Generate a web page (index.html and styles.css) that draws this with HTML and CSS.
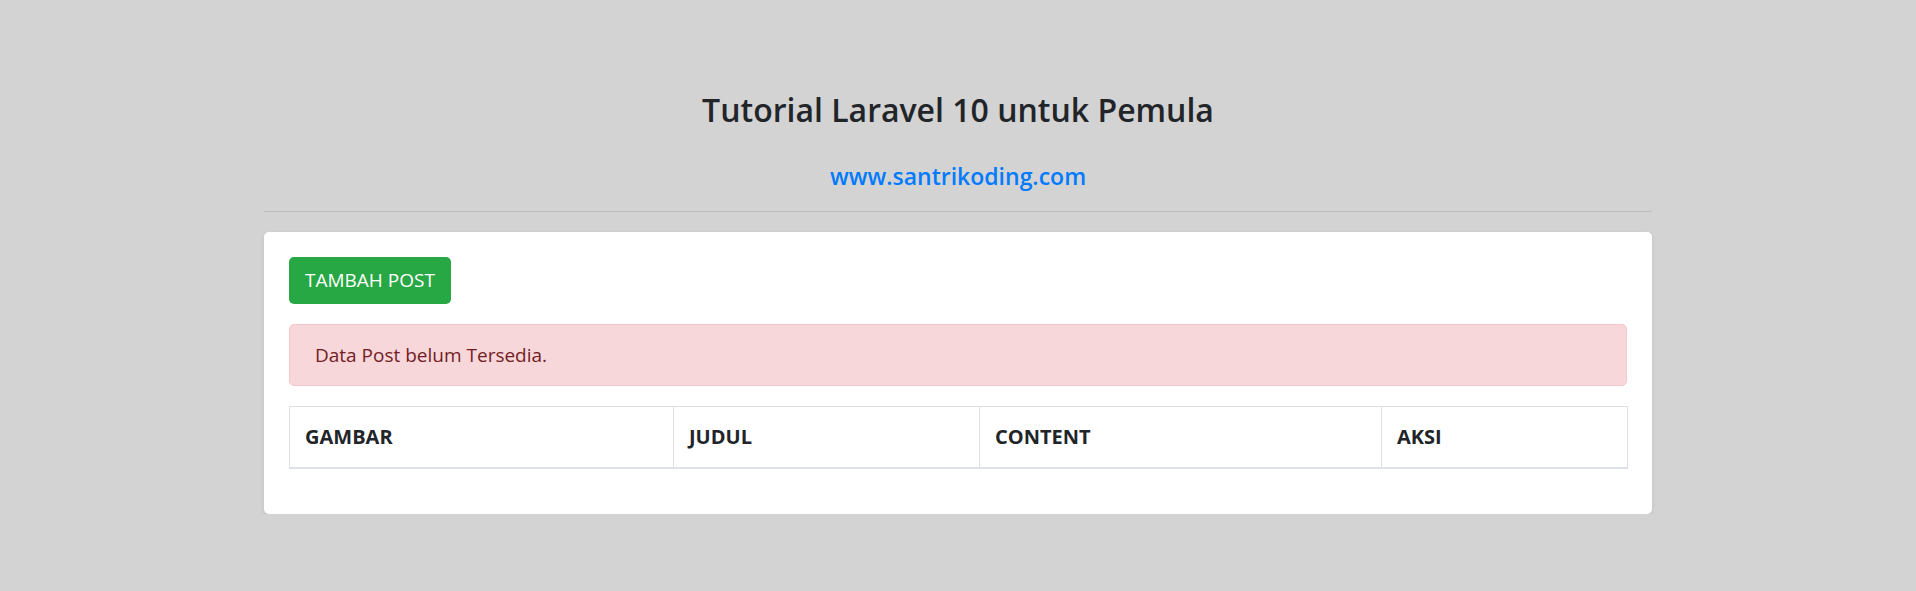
FILE: index.html
```html
<!DOCTYPE html>
<html lang="id">
<head>
<meta charset="utf-8">
<title>Tutorial Laravel 10 untuk Pemula</title>
<link rel="stylesheet" href="styles.css">
</head>
<body>
<div class="container">
  <div class="header">
    <h3 class="title">Tutorial Laravel 10 untuk Pemula</h3>
    <h5 class="subtitle"><a href="#">www.santrikoding.com</a></h5>
    <hr class="divider">
  </div>
  <div class="card">
    <a href="#" class="btn-success">TAMBAH POST</a>
    <div class="alert">Data Post belum Tersedia.</div>
    <table class="table">
      <colgroup>
        <col class="c1"><col class="c2"><col class="c3"><col class="c4">
      </colgroup>
      <thead>
        <tr>
          <th>GAMBAR</th>
          <th>JUDUL</th>
          <th>CONTENT</th>
          <th>AKSI</th>
        </tr>
      </thead>
    </table>
  </div>
</div>
</body>
</html>
```
FILE: styles.css
```css
html, body {
  margin: 0;
  padding: 0;
}
body {
  background: #d3d3d3;
  font-family: "Open Sans", "Noto Sans", "Liberation Sans", sans-serif;
  color: #212529;
  font-size: 20px;
  line-height: 1.5;
}
.container {
  width: 1388px;
  margin: 0 auto;
  padding-top: 59px;
}
.header {
  text-align: center;
}
.title {
  font-size: 32px;
  font-weight: 600;
  line-height: 42px;
  margin: 30px 0 30px;
  color: #212529;
}
.subtitle {
  font-size: 23px;
  font-weight: 600;
  line-height: 30px;
  margin: 0 0 10px;
}
.subtitle a {
  color: #007bff;
  text-decoration: none;
}
.divider {
  border: 0;
  border-top: 1px solid rgba(0, 0, 0, 0.1);
  margin: 20px 0 20px;
  height: 0;
}
.card {
  background: #fff;
  border-radius: 5px;
  box-shadow: 0 2.5px 5px rgba(0, 0, 0, 0.075);
  padding: 25px;
  display: flex;
  flex-direction: column;
  align-items: flex-start;
}
.btn-success {
  display: inline-block;
  background: #28a745;
  color: #fff;
  text-decoration: none;
  font-size: 19px;
  line-height: 30px;
  padding: 8px 16px 9px;
  border-radius: 5px;
  margin-bottom: 20px;
}
.alert {
  align-self: stretch;
  background: #f8d7da;
  border: 1px solid #f5c6cb;
  color: #721c24;
  border-radius: 5px;
  padding: 15px 25px;
  font-size: 19px;
  line-height: 30px;
  margin-bottom: 20px;
}
.table {
  align-self: stretch;
  border-collapse: collapse;
  table-layout: fixed;
  width: 100%;
  margin-bottom: 20px;
}
.c1 { width: 384px; }
.c2 { width: 306px; }
.c3 { width: 402px; }
.c4 { width: 246px; }
.table th {
  text-align: left;
  font-weight: 700;
  font-size: 20px;
  line-height: 30px;
  padding: 15px 15px;
  border: 1px solid #dee2e6;
  border-bottom: 2px solid #dee2e6;
}
```
